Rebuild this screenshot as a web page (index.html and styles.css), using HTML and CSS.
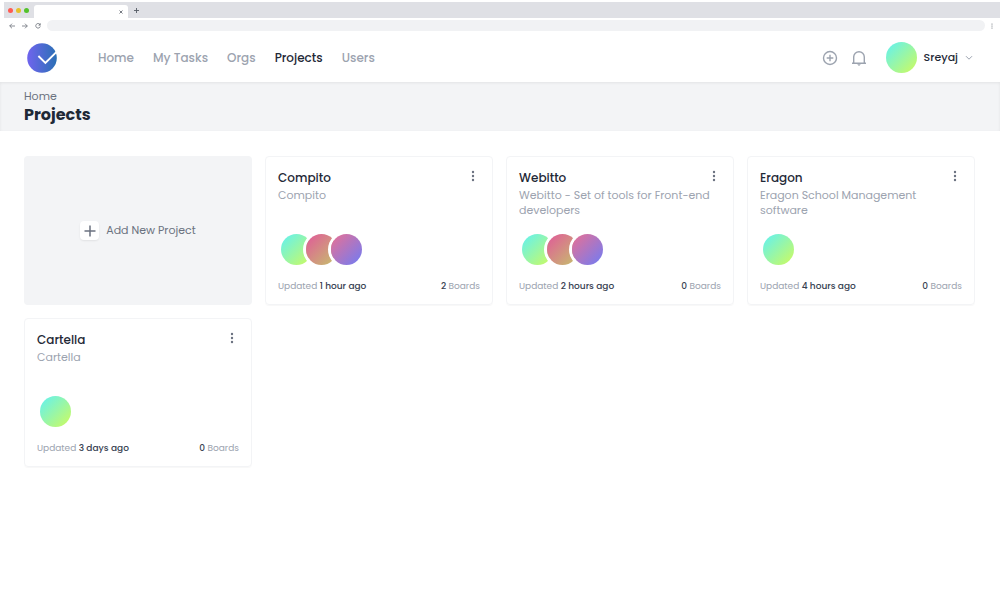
FILE: index.html
```html
<!DOCTYPE html>
<html lang="en">
<head>
<meta charset="utf-8">
<meta name="viewport" content="width=device-width, initial-scale=1">
<title>Projects</title>
<link rel="stylesheet" href="styles.css">
</head>
<body>
<svg class="defs" aria-hidden="true">
  <symbol id="dots" viewBox="0 0 4 12"><circle cx="2" cy="2" r="1.200"/><circle cx="2" cy="6" r="1.200"/><circle cx="2" cy="10" r="1.200"/></symbol>
</svg>
<div class="browser">
  <div class="tabstrip">
    <div class="lights"><i class="light red"></i><i class="light yellow"></i><i class="light green"></i></div>
    <div class="tab"><button class="bare" aria-label="Close tab"><svg width="4" height="4" viewBox="0 0 4 4"><path d="M.5.5l3 3M3.500.5l-3 3" stroke="#555b64" stroke-width=".8"/></svg></button></div>
    <button class="bare newtab" aria-label="New tab"><svg width="5" height="5" viewBox="0 0 5 5"><path d="M2.500 0v5M0 2.500h5" stroke="#555b64" stroke-width=".9"/></svg></button>
  </div>
  <div class="toolbar">
    <div class="history">
      <button class="bare" aria-label="Back"><svg width="6" height="6" viewBox="0 0 6 6"><path d="M6 3H.7M3 .7L.7 3 3 5.300" fill="none" stroke="#6b7078" stroke-width=".8"/></svg></button>
      <button class="bare" aria-label="Forward"><svg width="6" height="6" viewBox="0 0 6 6"><path d="M0 3h5.300M3 .7L5.300 3 3 5.300" fill="none" stroke="#6b7078" stroke-width=".8"/></svg></button>
      <button class="bare" aria-label="Reload"><svg width="6" height="6" viewBox="0 0 6 6"><path d="M4.900 1.400A2.300 2.300 0 1 0 5.300 3.400" fill="none" stroke="#6b7078" stroke-width=".8"/><path d="M5.600 0v2.500H3.200z" fill="#6b7078"/></svg></button>
    </div>
    <input class="address" type="text" aria-label="Address">
    <button class="bare" aria-label="Browser menu"><svg class="menu-dots" width="2" height="6"><use href="#dots"/></svg></button>
  </div>
</div>
<header class="header">
  <a class="logo" href="#" aria-label="Home page">
    <svg width="30" height="30" viewBox="0 0 30 30"><defs><linearGradient id="lg"><stop offset="0" stop-color="#7064ee"/><stop offset="1" stop-color="#2a70b5"/></linearGradient></defs><circle cx="15" cy="15" r="14.800" fill="url(#lg)"/><path d="M11.400 13l7 6.900L29.500 8.900" fill="none" stroke="#fff" stroke-width="1.900"/></svg>
  </a>
  <nav class="nav">
    <a href="#">Home</a><a href="#">My Tasks</a><a href="#">Orgs</a><a class="active" href="#">Projects</a><a href="#">Users</a>
  </nav>
  <div class="actions">
    <button class="bare" aria-label="Create"><svg width="16" height="16" viewBox="0 0 16 16" fill="none" stroke="#9ca3af" stroke-width="1.400"><circle cx="8" cy="8" r="6.500"/><path d="M8 4.700v6.600M4.700 8h6.600"/></svg></button>
    <button class="bare" aria-label="Notifications"><svg width="16" height="16" viewBox="0 0 16 16" fill="none" stroke="#9ca3af" stroke-width="1.400"><path d="M2.700 13V7.100a5.300 5.300 0 0 1 10.600 0V13M1 13.200h14"/><path d="M6.100 14.200h3.800L8 15.900z" fill="#9ca3af" stroke="none"/></svg></button>
    <button class="bare user"><span class="avatar mint"></span><span>Sreyaj</span><svg width="8" height="6" viewBox="0 0 8 6"><path d="M1 1.200l3 3 3-3" fill="none" stroke="#9ca3af"/></svg></button>
  </div>
</header>
<section class="subheader">
  <a href="#">Home</a>
  <h1>Projects</h1>
</section>
<main class="grid">
  <button class="add"><span class="plus"><svg width="12" height="12" viewBox="0 0 12 12"><path d="M6 .5v11M.5 6h11" stroke="#6b7280" stroke-width="1.500"/></svg></span>Add New Project</button>
  <article class="card">
    <div class="top"><h2>Compito</h2><button class="bare" aria-label="Compito options"><svg width="4" height="12"><use href="#dots"/></svg></button></div>
    <p class="desc">Compito</p>
    <div class="people"><span class="avatar mint"></span><span class="avatar rose"></span><span class="avatar violet"></span></div>
    <footer><span>Updated <b>1 hour ago</b></span><span><b>2</b> Boards</span></footer>
  </article>
  <article class="card">
    <div class="top"><h2>Webitto</h2><button class="bare" aria-label="Webitto options"><svg width="4" height="12"><use href="#dots"/></svg></button></div>
    <p class="desc">Webitto - Set of tools for Front-end developers</p>
    <div class="people"><span class="avatar mint"></span><span class="avatar rose"></span><span class="avatar violet"></span></div>
    <footer><span>Updated <b>2 hours ago</b></span><span><b>0</b> Boards</span></footer>
  </article>
  <article class="card">
    <div class="top"><h2>Eragon</h2><button class="bare" aria-label="Eragon options"><svg width="4" height="12"><use href="#dots"/></svg></button></div>
    <p class="desc">Eragon School Management software</p>
    <div class="people"><span class="avatar mint"></span></div>
    <footer><span>Updated <b>4 hours ago</b></span><span><b>0</b> Boards</span></footer>
  </article>
  <article class="card">
    <div class="top"><h2>Cartella</h2><button class="bare" aria-label="Cartella options"><svg width="4" height="12"><use href="#dots"/></svg></button></div>
    <p class="desc">Cartella</p>
    <div class="people"><span class="avatar mint"></span></div>
    <footer><span>Updated <b>3 days ago</b></span><span><b>0</b> Boards</span></footer>
  </article>
</main>
</body>
</html>
```
FILE: styles.css
```css
* { box-sizing: border-box; }
body { margin: 0; background: #fff; color: #1f2937; font-family: Poppins, Inter, sans-serif; }
h1, h2, p { margin: 0; }
a { color: inherit; text-decoration: none; }
svg { display: block; }
.defs { position: absolute; width: 0; height: 0; }
.bare { display: block; padding: 0; border: 0; background: none; font: inherit; color: inherit; cursor: pointer; }

.browser { padding: 2px 0 0 4px; }
.tabstrip { display: flex; align-items: center; height: 16px; background: #dfe0e5; }
.lights { display: flex; gap: 3px; padding: 0 5px 0 4px; }
.light { width: 5px; height: 5px; border-radius: 50%; }
.red { background: #ff5b52; }
.yellow { background: #e6c029; }
.green { background: #53c22b; }
.tab { display: flex; align-items: center; justify-content: flex-end; align-self: flex-end; width: 94px; height: 13px; padding-right: 5px; border-radius: 3px 3px 0 0; background: #fff; }
.newtab { margin-left: 6px; }
.toolbar { display: flex; align-items: center; gap: 6px; height: 15px; padding: 0 7px 0 5px; }
.history { display: flex; gap: 7px; }
.address { flex: 1; min-width: 0; height: 11px; border: 0; border-radius: 6px; padding: 0 8px; background: #f1f2f4; font-size: 8px; }
.menu-dots { fill: #6b7078; }

.header { display: flex; align-items: center; height: 49px; padding: 0 27px; }
.nav { display: flex; gap: 19px; margin-left: 41px; font-size: 12px; font-weight: 500; color: #9ca3af; }
.nav .active { color: #1f2937; }
.actions { display: flex; align-items: center; gap: 13px; margin-left: auto; }
.user { display: flex; align-items: center; gap: 7px; margin-left: 6px; font-size: 11px; font-weight: 500; }
.avatar { width: 31px; height: 31px; border-radius: 50%; }
.mint { background: linear-gradient(135deg, #5ff1f5, #d0fb5b); }
.rose { background: linear-gradient(135deg, #e1589a, #c5c26b); }
.violet { background: linear-gradient(135deg, #ea7092, #6f7cf5); }

.subheader { padding: 6px 24px; background: #f3f4f6; box-shadow: inset 0 1px 3px rgba(0, 0, 0, .07); }
.subheader a { display: block; font-size: 11px; line-height: 16px; color: #6b7280; }
.subheader h1 { font-size: 16px; line-height: 21px; font-weight: 700; }

.grid { display: grid; grid-template-columns: repeat(4, minmax(0, 1fr)); grid-auto-rows: minmax(149px, auto); gap: 13px; padding: 25px 25px 25px 24px; }
.add { display: flex; align-items: center; justify-content: center; gap: 7px; border: 0; border-radius: 4px; background: #f3f4f6; color: #6b7280; font: 400 11px Poppins, Inter, sans-serif; cursor: pointer; }
.plus { display: grid; place-items: center; width: 19px; height: 19px; border-radius: 4px; background: #fff; box-shadow: 0 1px 2px rgba(0, 0, 0, .08); }
.card { display: flex; flex-direction: column; padding: 12px; border: 1px solid #f3f4f6; border-radius: 4px; box-shadow: 0 1px 1px rgba(0, 0, 0, .03); }
.top { display: flex; justify-content: space-between; margin-bottom: 1px; }
.top h2 { font-size: 12px; line-height: 18px; font-weight: 500; }
.top .bare { width: 14px; height: 14px; fill: #6b7280; }
.top svg { margin: 0 auto; }
.desc { font-size: 11px; line-height: 15px; color: #9ca3af; }
.people { display: flex; gap: 25px; margin-top: auto; padding: 3px; }
.people .avatar { box-shadow: 0 0 0 3px #fff; }
.people .avatar + .avatar { margin-left: -31px; }
.card footer { display: flex; justify-content: space-between; margin-top: 12px; font-size: 9px; line-height: 12px; color: #9ca3af; }
.card b { font-weight: 500; color: #374151; }
```
